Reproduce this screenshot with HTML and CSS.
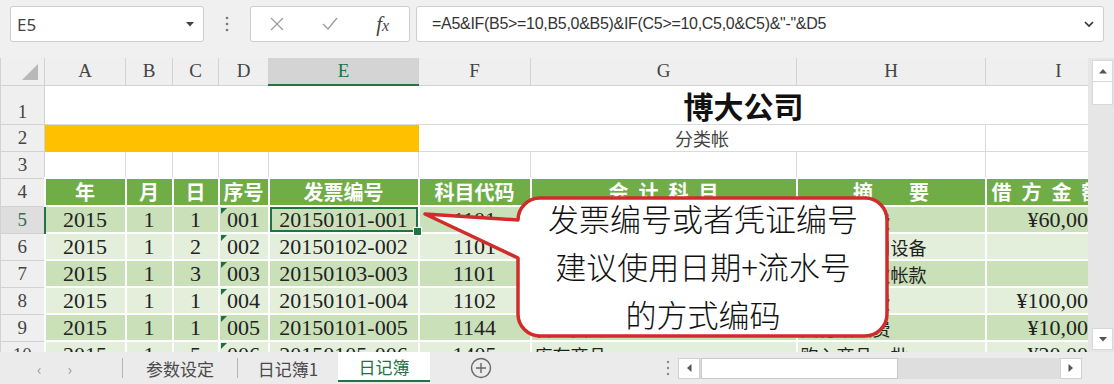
FILE: index.html
```html
<!doctype html>
<html lang="zh-CN">
<head>
    <meta charset="utf-8" />
    <title>日记簿 - 分类帐</title>
    <link rel="stylesheet" href="styles.css">
</head>
<body>
    <div class="app">
        <!-- Formula bar -->
        <div class="formula-bar">
            <div class="name-box">
                <span>E5</span>
                <svg width="10" height="6" viewBox="0 0 10 6"><polygon points="1,1 9,1 5,5.5" fill="#444"/></svg>
            </div>
            <div class="dots">
                <svg width="4" height="18" viewBox="0 0 4 18"><circle cx="2" cy="3" r="1.3" fill="#777"/><circle cx="2" cy="9" r="1.3" fill="#777"/><circle cx="2" cy="15" r="1.3" fill="#777"/></svg>
            </div>
            <div class="fn-box">
                <span class="fn-btn"><svg width="16" height="16" viewBox="0 0 16 16"><path d="M2 2 L14 14 M14 2 L2 14" stroke="#9a9a9a" stroke-width="1.2" fill="none"/></svg></span>
                <span class="fn-btn"><svg width="18" height="16" viewBox="0 0 18 16"><path d="M2 8 L7 13 L16 2" stroke="#9a9a9a" stroke-width="1.2" fill="none"/></svg></span>
                <span class="fn-btn fx">f<i>x</i></span>
            </div>
            <div class="formula">
                <span>=A5&amp;IF(B5&gt;=10,B5,0&amp;B5)&amp;IF(C5&gt;=10,C5,0&amp;C5)&amp;"-"&amp;D5</span>
                <svg width="12" height="8" viewBox="0 0 12 8"><path d="M2 2 L6 6 L10 2" stroke="#333" stroke-width="1.6" fill="none"/></svg>
            </div>
        </div>

        <!-- Sheet -->
        <div class="sheet">
            <div class="grid">
                <table class="cells">
                    <colgroup>
                        <col class="c-hd"><col class="c-a"><col class="c-b"><col class="c-c"><col class="c-d">
                        <col class="c-e"><col class="c-f"><col class="c-g"><col class="c-h"><col class="c-i">
                    </colgroup>
                    <tr class="hd-row">
                        <th class="corner"><svg width="44" height="26" viewBox="0 0 44 26"><polygon points="21,22 37,6 37,22" fill="#b8b8b8"/></svg></th>
                        <th>A</th><th>B</th><th>C</th><th>D</th><th class="col-sel">E</th><th>F</th><th>G</th><th>H</th><th>I</th>
                    </tr>
                    <tr class="r1">
                        <th>1</th>
                        <td colspan="9" class="title">博大公司</td>
                    </tr>
                    <tr class="row">
                        <th>2</th>
                        <td colspan="5" class="orange"></td>
                        <td colspan="3" class="sub">分类帐</td>
                        <td></td>
                    </tr>
                    <tr class="row">
                        <th>3</th>
                        <td></td><td></td><td></td><td></td><td></td><td></td><td></td><td></td><td></td>
                    </tr>
                    <tr class="row head">
                        <th>4</th>
                        <td>年</td><td>月</td><td>日</td><td>序号</td><td>发票编号</td><td>科目代码</td>
                        <td><span class="sp1">会计科目</span></td>
                        <td><span class="sp2">摘要</span></td>
                        <td class="left"><span class="sp3">借方金额</span></td>
                    </tr>
                    <tr class="row g1">
                        <th class="row-sel">5</th>
                        <td>2015</td><td>1</td><td>1</td><td class="tri">001</td><td class="sel">20150101-001</td><td>1101</td>
                        <td class="txt">库存现金</td><td class="txt">支付办公费</td><td class="amt">¥60,000.00</td>
                    </tr>
                    <tr class="row g2">
                        <th>6</th>
                        <td>2015</td><td>1</td><td>2</td><td class="tri">002</td><td>20150102-002</td><td>1101</td>
                        <td class="txt">固定资产</td><td class="txt">购买办公用设备</td><td class="amt"></td>
                    </tr>
                    <tr class="row g1">
                        <th>7</th>
                        <td>2015</td><td>1</td><td>3</td><td class="tri">003</td><td>20150103-003</td><td>1101</td>
                        <td class="txt">应收账款</td><td class="txt">收回客户欠帐款</td><td class="amt"></td>
                    </tr>
                    <tr class="row g2">
                        <th>8</th>
                        <td>2015</td><td>1</td><td>1</td><td class="tri">004</td><td>20150101-004</td><td>1102</td>
                        <td class="txt">管理费用</td><td class="txt">支付差旅费</td><td class="amt">¥100,000.00</td>
                    </tr>
                    <tr class="row g1">
                        <th>9</th>
                        <td>2015</td><td>1</td><td>1</td><td class="tri">005</td><td>20150101-005</td><td>1144</td>
                        <td class="txt">管理费用</td><td class="txt">支付培训费</td><td class="amt">¥10,000.00</td>
                    </tr>
                    <tr class="row g2">
                        <th>10</th>
                        <td>2015</td><td>1</td><td>5</td><td class="tri">006</td><td>20150105-006</td><td>1405</td>
                        <td class="txt">库存商品</td><td class="txt">购入商品一批</td><td class="amt">¥20,000.00</td>
                    </tr>
                </table>
            </div>
            <div class="vscroll">
                <div class="vs-btn"><svg width="10" height="6" viewBox="0 0 10 6"><polygon points="1,5.5 9,5.5 5,1" fill="#555"/></svg></div>
                <div class="vs-thumb"></div>
                <div class="vs-space"></div>
                <div class="vs-btn"><svg width="10" height="6" viewBox="0 0 10 6"><polygon points="1,1 9,1 5,5.5" fill="#555"/></svg></div>
            </div>
        </div>

        <!-- Sheet tabs -->
        <div class="tab-bar">
            <div class="tab-nav"><span>‹</span><span>›</span></div>
            <div class="sep"></div>
            <div class="tab t1">参数设定</div>
            <div class="sep"></div>
            <div class="tab t2">日记簿1</div>
            <div class="tab t3 active">日记簿</div>
            <div class="add-sheet">
                <svg width="22" height="22" viewBox="0 0 22 22"><circle cx="11" cy="11" r="9.5" stroke="#666" stroke-width="1.4" fill="none"/><path d="M11 6 V16 M6 11 H16" stroke="#666" stroke-width="1.4"/></svg>
            </div>
            <div class="hs-dots">
                <svg width="4" height="18" viewBox="0 0 4 18"><circle cx="2" cy="3" r="1.2" fill="#888"/><circle cx="2" cy="9" r="1.2" fill="#888"/><circle cx="2" cy="15" r="1.2" fill="#888"/></svg>
            </div>
            <div class="hscroll">
                <div class="hs-btn"><svg width="6" height="10" viewBox="0 0 6 10"><polygon points="5.5,1 5.5,9 1,5" fill="#555"/></svg></div>
                <div class="hs-thumb"></div>
                <div class="hs-space"></div>
                <div class="hs-btn"><svg width="6" height="10" viewBox="0 0 6 10"><polygon points="0.5,1 0.5,9 5,5" fill="#555"/></svg></div>
            </div>
        </div>

        <!-- Callout over the sheet -->
        <svg class="callout" width="1114" height="384" viewBox="0 0 1114 384">
            <path d="M425 214 L518 220 A22 22 0 0 1 540 198 L865 198 A22 22 0 0 1 887 220 L887 314 A22 22 0 0 1 865 336 L540 336 A22 22 0 0 1 518 314 L518 258 Z"
                  fill="#fff" stroke="#d12c2c" stroke-width="3.5" stroke-linejoin="round"/>
        </svg>
        <div class="callout-text">
            发票编号或者凭证编号<br>
            建议使用日期+流水号<br>
            的方式编码
        </div>
    </div>
</body>
</html>
```

FILE: styles.css
```css
* {
    box-sizing: border-box;
}
body {
    margin: 0;
    background: #f0f0f0;
    font-family: "Noto Sans CJK SC", "Noto Sans", sans-serif;
}
.app {
    position: relative;
    width: 1114px;
    height: 384px;
    display: flex;
    flex-direction: column;
    overflow: hidden;
}

/* formula bar */
.formula-bar {
    height: 58px;
    flex: none;
    display: flex;
    align-items: flex-start;
    padding: 6px 10px 0 10px;
}
.name-box, .fn-box, .formula {
    height: 36px;
    background: #fff;
    border: 1px solid #cdcdcd;
    border-radius: 3px;
    display: flex;
    align-items: center;
}
.name-box {
    width: 194px;
    justify-content: space-between;
    padding: 0 8px 0 6px;
    font-family: "Noto Sans", sans-serif;
    font-size: 17px;
    color: #444;
}
.dots {
    width: 46px;
    height: 36px;
    display: flex;
    align-items: center;
    justify-content: center;
}
.fn-box {
    width: 160px;
}
.fn-btn {
    width: 53px;
    display: flex;
    justify-content: center;
}
.fx {
    font-family: "Liberation Serif", serif;
    font-style: italic;
    font-size: 21px;
    color: #444;
}
.fx i {
    font-size: 16px;
    margin-top: 5px;
}
.formula {
    flex: 1;
    margin-left: 6px;
    justify-content: space-between;
    padding: 0 8px 0 15px;
    font-family: "Liberation Sans", sans-serif;
    font-size: 16px;
    letter-spacing: -0.3px;
    color: #333;
}

/* sheet */
.sheet {
    flex: 1;
    display: flex;
    overflow: hidden;
}
.grid {
    width: 1088px;
    overflow: hidden;
    background: #fff;
}
.cells {
    border-collapse: collapse;
    table-layout: fixed;
    width: 1131px;
}
.c-hd { width: 44px; }
.c-a { width: 81px; }
.c-b { width: 47px; }
.c-c { width: 46px; }
.c-d { width: 50px; }
.c-e { width: 150px; }
.c-f { width: 112px; }
.c-g { width: 266px; }
.c-h { width: 189px; }
.c-i { width: 146px; }

.cells th, .cells td {
    padding: 0 4px;
    white-space: nowrap;
    line-height: 20px;
}
.cells th {
    background: #efefef;
    border: 1px solid #d2d2d2;
    font-weight: normal;
    font-family: "Liberation Serif", serif;
    font-size: 19px;
    color: #444;
}
.cells td {
    border: 1px solid #dadada;
    font-family: "Liberation Serif", "Noto Sans CJK SC", serif;
    font-size: 22px;
    color: #222;
    text-align: center;
}
.hd-row th {
    height: 27px;
    border-top: none;
}
.hd-row th.corner {
    padding: 0;
    line-height: 0;
}
.r1 th, .r1 td {
    height: 39px;
}
.r1 th {
    vertical-align: bottom;
    padding-bottom: 2px;
}
.row th, .row td {
    height: 27px;
}
.head th, .head td {
    height: 28px;
}
.cells th.col-sel {
    background: #d4d4d4;
    color: #217346;
    border-bottom: 2px solid #217346;
}
.cells th.row-sel {
    background: #dedede;
    color: #3d6b4f;
    border-right: 2px solid #217346;
}

.cells td.title {
    padding-left: 315px;
    font-family: "Noto Sans CJK SC", sans-serif;
    font-weight: bold;
    font-size: 30px;
    line-height: 32px;
    color: #111;
}
.cells td.orange {
    background: #ffc000;
    border-color: #ffc000;
}
.cells td.sub {
    font-family: "Noto Sans CJK SC", sans-serif;
    font-size: 18px;
    color: #444;
}

.head td {
    background: #70ad47;
    border: 2px solid #fff;
    color: #fff;
    font-family: "Noto Sans CJK SC", sans-serif;
    font-weight: bold;
    font-size: 20px;
}
.head td.left {
    text-align: left;
    padding-left: 5px;
}
.sp1 {
    letter-spacing: 10px;
    margin-right: -10px;
}
.sp2 {
    letter-spacing: 36px;
    margin-right: -36px;
}
.sp3 {
    letter-spacing: 10px;
}

.g1 td, .g2 td {
    border: 2px solid #fff;
}
.g1 td {
    background: #c9e0b9;
}
.g2 td {
    background: #e3efdb;
}
td.txt {
    text-align: left;
    padding-left: 3px;
    font-family: "Noto Sans CJK SC", sans-serif;
    font-size: 18px;
}
td.amt {
    text-align: right;
}
td.tri {
    position: relative;
}
td.tri::before {
    content: "";
    position: absolute;
    left: 1px;
    top: 1px;
    border-top: 6px solid #1f6e43;
    border-right: 6px solid transparent;
}
td.sel {
    position: relative;
    box-shadow: inset 0 0 0 2px #217346;
}
td.sel::after {
    content: "";
    position: absolute;
    right: -4px;
    bottom: -4px;
    width: 7px;
    height: 7px;
    background: #217346;
    border: 1px solid #fff;
}

/* vertical scrollbar */
.vscroll {
    width: 26px;
    background: #e6e6e6;
    display: flex;
    flex-direction: column;
    align-items: flex-end;
    padding: 2px 1px 2px 0;
}
.vs-btn {
    width: 21px;
    height: 22px;
    background: #fff;
    border: 1px solid #d8d8d8;
    display: flex;
    align-items: center;
    justify-content: center;
}
.vs-thumb {
    width: 21px;
    height: 23px;
    background: #fff;
    border: 1px solid #d8d8d8;
    border-top: none;
}
.vs-space {
    flex: 1;
}

/* tabs */
.tab-bar {
    height: 32px;
    flex: none;
    display: flex;
    align-items: center;
    background: #ebebeb;
    font-size: 17px;
    color: #4a4a4a;
}
.tab-nav {
    width: 122px;
    display: flex;
    gap: 26px;
    padding-left: 37px;
    color: #999;
    font-size: 15px;
}
.sep {
    width: 1px;
    height: 20px;
    background: #b5b5b5;
}
.tab {
    height: 32px;
    display: flex;
    align-items: center;
    justify-content: center;
}
.t1 { width: 114px; }
.t2 { width: 100px; }
.t3 { width: 92px; }
.tab.active {
    height: 30px;
    align-self: flex-start;
    background: #fff;
    color: #217346;
    border-bottom: 2px solid #217346;
}
.add-sheet {
    margin-left: 40px;
    width: 22px;
    height: 22px;
    line-height: 0;
}
.hs-dots {
    margin-left: 167px;
    width: 18px;
    display: flex;
    justify-content: center;
}
.hscroll {
    margin-left: 1px;
    width: 404px;
    height: 21px;
    display: flex;
    background: #dedede;
}
.hs-btn {
    width: 22px;
    background: #fff;
    border: 1px solid #d0d0d0;
    display: flex;
    align-items: center;
    justify-content: center;
}
.hs-thumb {
    width: 197px;
    margin-left: 1px;
    background: #fff;
    border: 1px solid #c8c8c8;
}
.hs-space {
    flex: 1;
}

/* callout */
.callout {
    position: absolute;
    left: 0;
    top: 0;
    pointer-events: none;
}
.callout-text {
    position: absolute;
    left: 518px;
    top: 194px;
    width: 370px;
    text-align: center;
    font-size: 31px;
    font-weight: 300;
    line-height: 48px;
    color: #111;
}
```
